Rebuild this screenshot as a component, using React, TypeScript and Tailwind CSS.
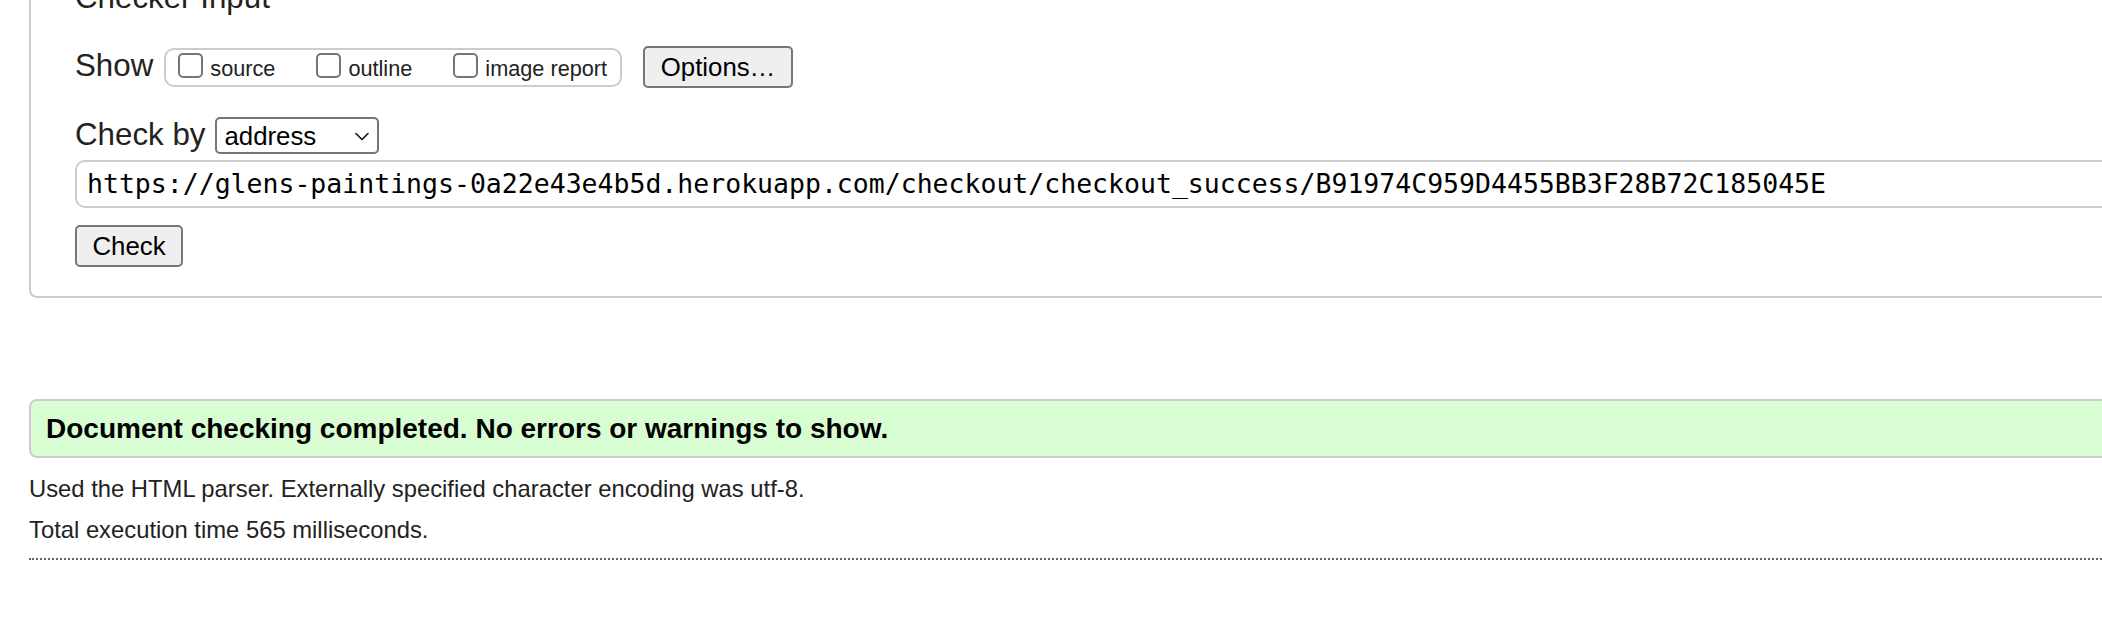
import React from "react";

const sans = { fontFamily: '"Liberation Sans", Arial, Helvetica, sans-serif' };

function Box({ label }: { label: string }) {
  return (
    <label className="flex items-center">
      <input
        type="checkbox"
        className="appearance-none w-[25px] h-[25px] border-2 border-[#767676] rounded-[5px] bg-white mb-[3px] m-0"
      />
      <span className="ml-[7px] text-[21.7px] leading-[26px] text-[#222] mt-[3px]">{label}</span>
    </label>
  );
}

export default function App() {
  return (
    <div className="w-[2102px] h-[624px] overflow-hidden bg-white text-[#222]" style={sans}>
      <div className="pl-[29px]">
        <div className="w-[2300px] mt-[-22px] border-2 border-[#cccccc] rounded-[8px] pl-[44px] pb-[29px]">
          <div className="text-[31.3px] leading-[36px] text-[#222]">Checker Input</div>

          <div className="mt-[30px] flex items-center h-[42px]">
            <span className="text-[31.3px] leading-[36px] mb-[3px]">Show</span>
            <div className="ml-[11px] h-[39px] flex items-center border-2 border-[#cccccc] rounded-[10px] pl-[12px] pr-[13px]">
              <Box label="source" />
              <div className="w-[41px]" />
              <Box label="outline" />
              <div className="w-[41px]" />
              <Box label="image report" />
            </div>
            <button
              type="button"
              className="ml-[21px] w-[150px] h-[42px] bg-[#efefef] border-2 border-[#767676] rounded-[5px] text-[25.8px] leading-[30px] text-black flex items-center justify-center"
            >
              Options…
            </button>
          </div>

          <div className="mt-[29px] flex items-center h-[37px]">
            <span className="text-[31.3px] leading-[36px] mb-[2px]">Check by</span>
            <div className="ml-[10px] w-[164px] h-[37px] border-2 border-[#767676] rounded-[5px] bg-white flex items-center justify-between pl-[7px] pr-[8px]">
              <span className="text-[25.8px] leading-[30px] text-black">address</span>
              <svg width="14" height="9" viewBox="0 0 14 9" className="mt-[1px]">
                <path d="M1 1.5 L7 7.5 L13 1.5" fill="none" stroke="#111" strokeWidth="1.6" strokeLinecap="round" strokeLinejoin="round" />
              </svg>
            </div>
          </div>

          <div className="mt-[6px] h-[48px] border-2 border-[#cccccc] rounded-[10px] flex items-center pl-[10px] bg-white">
            <span
              className="text-[26.5px] leading-[32px] text-black whitespace-nowrap"
              style={{ fontFamily: '"DejaVu Sans Mono", "Liberation Mono", monospace' }}
            >
              https://glens-paintings-0a22e43e4b5d.herokuapp.com/checkout/checkout_success/B91974C959D4455BB3F28B72C185045E
            </span>
          </div>

          <button
            type="button"
            className="mt-[17px] w-[108px] h-[42px] bg-[#efefef] border-2 border-[#767676] rounded-[5px] text-[25.8px] leading-[30px] text-black flex items-center justify-center"
          >
            Check
          </button>
        </div>

        <div className="mt-[101px] w-[2300px] h-[59px] border-2 border-[#cccccc] rounded-[8px] bg-[#d9fdd3] flex items-center pl-[15px]">
          <span className="text-[28px] leading-[32px] font-bold text-black">
            Document checking completed. No errors or warnings to show.
          </span>
        </div>

        <p className="mt-[16px] text-[23.8px] leading-[30px] text-[#222]">
          Used the HTML parser. Externally specified character encoding was utf-8.
        </p>
        <p className="mt-[11px] text-[23.8px] leading-[30px] text-[#222]">
          Total execution time 565 milliseconds.
        </p>
        <div className="mt-[13px] w-[2300px] border-t-2 border-dotted border-[#666]" />
      </div>
    </div>
  );
}
